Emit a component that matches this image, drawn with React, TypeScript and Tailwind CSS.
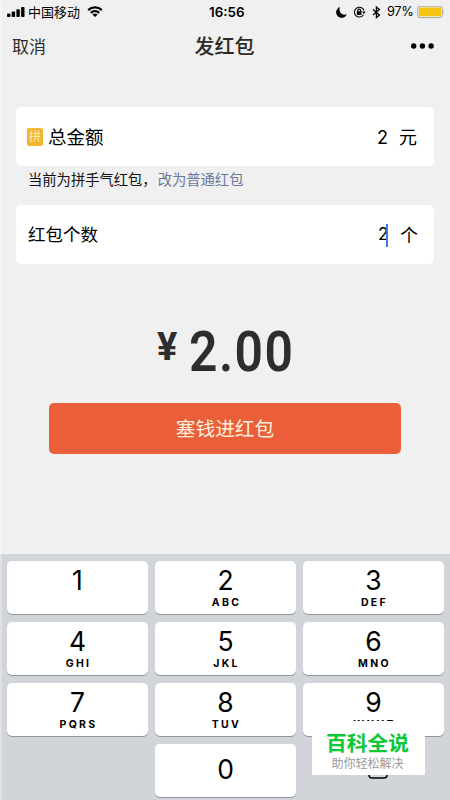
import React from "react";

const keys: [string, string][] = [
  ["1", ""],
  ["2", "ABC"],
  ["3", "DEF"],
  ["4", "GHI"],
  ["5", "JKL"],
  ["6", "MNO"],
  ["7", "PQRS"],
  ["8", "TUV"],
  ["9", "WXYZ"],
];

const cjk = "font-['Inter','Noto_Sans_CJK_SC',sans-serif]";

function StatusBar() {
  return (
    <div className="flex h-6 items-center pl-[7px] pr-[5px] text-black">
      <svg width="18" height="11" viewBox="0 0 18 11">
        <rect x="0" y="6.5" width="3.4" height="3.5" rx="0.8" />
        <rect x="4.7" y="4.5" width="3.4" height="5.5" rx="0.8" />
        <rect x="9.4" y="2.3" width="3.4" height="7.7" rx="0.8" />
        <rect x="14.1" y="0" width="3.4" height="10" rx="0.8" />
      </svg>
      <span className="ml-[3px] w-[53px] whitespace-nowrap text-[13px] leading-[22px]">中国移动</span>
      <svg className="ml-[6px]" width="16" height="12" viewBox="0 0 16 12" fill="none" stroke="#000" strokeWidth="2.2">
        <path d="M1.2 4.1C5 0.4 11 0.4 14.8 4.1" />
        <path d="M3.8 6.9C6.2 4.6 9.8 4.6 12.2 6.9" />
        <path d="M8 11L5.4 8.6C7 7.2 9 7.2 10.6 8.6Z" fill="#000" stroke="none" />
      </svg>
      <span className="ml-[106px] mt-[-1px] w-[38px] whitespace-nowrap text-[13.4px] font-semibold leading-6">16:56</span>
      <div className="flex-1" />
      <svg width="11" height="11" viewBox="0 0 11 11">
        <path d="M3.8 0.1A5.5 5.5 0 1 0 10.8 7.2C7 9 2.2 5.4 3.8 0.1Z" />
      </svg>
      <svg className="ml-[6px]" width="13" height="13" viewBox="0 0 13 13" fill="none" stroke="#000" strokeWidth="1.1">
        <path d="M10.5 8.7A4.9 4.9 0 1 1 11 4.7" />
        <path d="M9 5.6H12.6L10.9 8Z" fill="#000" stroke="none" />
        <rect x="3.9" y="5.2" width="4.6" height="3.7" fill="#000" stroke="none" />
        <path d="M4.8 6V4.5A1.4 1.4 0 0 1 7.6 4.5V6" />
      </svg>
      <svg className="ml-[6px]" width="9" height="13" viewBox="0 0 9 13" fill="none" stroke="#000" strokeWidth="1.3">
        <path d="M1 3.5L7.4 9L4.4 11.6V1L7.4 3.6L1 9.1" />
      </svg>
      <span className="ml-[6px] w-[27px] whitespace-nowrap text-[12.8px] leading-6 tracking-[-0.4px]">97%</span>
      <svg className="ml-[3px]" width="28" height="13" viewBox="0 0 28 13">
        <rect x="0.7" y="0.2" width="24.6" height="11.4" rx="2.3" fill="#f4f1e7" stroke="#a6a6a0" strokeWidth="1" />
        <rect x="2" y="1.5" width="22" height="8.8" rx="1" fill="#f6c511" />
        <path d="M26.3 3.9Q28 5.9 26.3 7.9Z" fill="#a6a6a0" />
      </svg>
    </div>
  );
}

function Key({ digit, letters }: { digit: string; letters: string }) {
  return (
    <div className="flex h-[53px] flex-col items-center rounded-[5px] bg-white text-black shadow-[0_1px_0_#92959b]">
      <span className="mt-[5px] h-[28px] text-[26.5px] leading-[28px]">{digit}</span>
      <span className="mt-[3px] pl-[2px] text-[10.5px] font-bold leading-[12px] tracking-[2.3px]">{letters}</span>
    </div>
  );
}

export default function App() {
  return (
    <div className={`relative flex h-[800px] w-[450px] flex-col overflow-hidden bg-[#f0f0f0] ${cjk}`}>
      <StatusBar />
      <div className="flex h-[45px] items-center pl-[12px] pr-[16px] text-[#2b2b2b]">
        <span className="w-[90px] pt-px text-[17px] leading-[45px]">取消</span>
        <span className="flex-1 pl-[3px] text-center text-[20px] font-medium leading-[42px]">发红包</span>
        <svg className="ml-[67px] mt-[-1px]" width="23" height="6" viewBox="0 0 23 6" fill="#000">
          <circle cx="2.7" cy="3" r="2.7" />
          <circle cx="11.4" cy="3" r="2.7" />
          <circle cx="20.1" cy="3" r="2.7" />
        </svg>
      </div>

      <div className="mx-[16px] mt-[38px] flex h-[59px] items-center rounded-[5px] bg-white pl-[11px] pr-[17px] pt-px text-[18px] text-black">
        <span className="flex h-[18px] w-[16px] items-center justify-center rounded-[2px] bg-[#f2b62e] text-[12.5px] font-light leading-none text-white">
          拼
        </span>
        <span className="ml-[5px] flex-1 pt-px text-[18.5px]">总金额</span>
        <span>2</span>
        <span className="ml-[11px]">元</span>
      </div>
      <p className="ml-[28px] h-[39px] whitespace-nowrap text-[14.3px] leading-[27px] text-[#111]">
        当前为拼手气红包，<span className="ml-[1px] text-[#6a779c]">改为普通红包</span>
      </p>
      <div className="mx-[16px] flex h-[59px] items-center rounded-[5px] bg-white pl-[12px] pr-[16px] pt-px text-[18px] text-black">
        <span className="flex-1 pt-px text-[17.5px]">红包个数</span>
        <span className="w-[8px] text-[17px]">2</span>
        <span className="h-[23px] w-[2px] bg-[#3d7be6]" />
        <span className="ml-[12px]">个</span>
      </div>

      <div className="mt-[59px] flex h-[58px] items-start pl-[157px] font-['Roboto',sans-serif] text-[#2d2d2d]">
        <span className="mt-[4px] w-[32px] text-[38px] font-bold leading-[40px]">¥</span>
        <span className="mt-[1px] origin-left scale-x-[0.89] whitespace-nowrap text-[56px] font-semibold leading-[56px] tracking-[1.6px]">
          2.00
        </span>
      </div>
      <button className="mx-[49px] mt-[22px] h-[51px] rounded-[5px] bg-[#ea5f39] pt-[2px] text-[19.7px] font-normal text-[#fff0de]">
        塞钱进红包
      </button>

      <div className="mt-[100px] h-[246px] bg-[#d1d5da] pl-[7px] pr-[6px] pt-[7px]">
        <div className="grid grid-cols-3 gap-x-[7px] gap-y-[8px]">
          {keys.map(([digit, letters]) => (
            <Key key={digit} digit={digit} letters={letters} />
          ))}
          <div className="col-start-2 flex h-[53px] items-center justify-center rounded-[5px] bg-white pb-[3px] text-[26.5px] leading-none text-black shadow-[0_1px_0_#92959b]">
            0
          </div>
          <div className="flex h-[53px] items-center justify-center pl-[9px]">
            <svg width="20" height="22" viewBox="0 0 20 22" fill="none" stroke="#000" strokeWidth="1.5">
              <rect x="1" y="2" width="18" height="16" rx="3" />
            </svg>
          </div>
        </div>
      </div>

      <div className="absolute left-[312px] top-[721px] flex h-[54px] w-[113px] flex-col items-center bg-white">
        <span className="mt-[10px] whitespace-nowrap pr-[2px] text-[20.7px] font-bold leading-[26px] text-[#0cc736]">百科全说</span>
        <span className="whitespace-nowrap pr-[2px] text-[12px] leading-[14px] text-[#999]">助你轻松解决</span>
      </div>
      <div className="absolute left-0 top-0 h-full w-[2px] bg-white/30" />
    </div>
  );
}
